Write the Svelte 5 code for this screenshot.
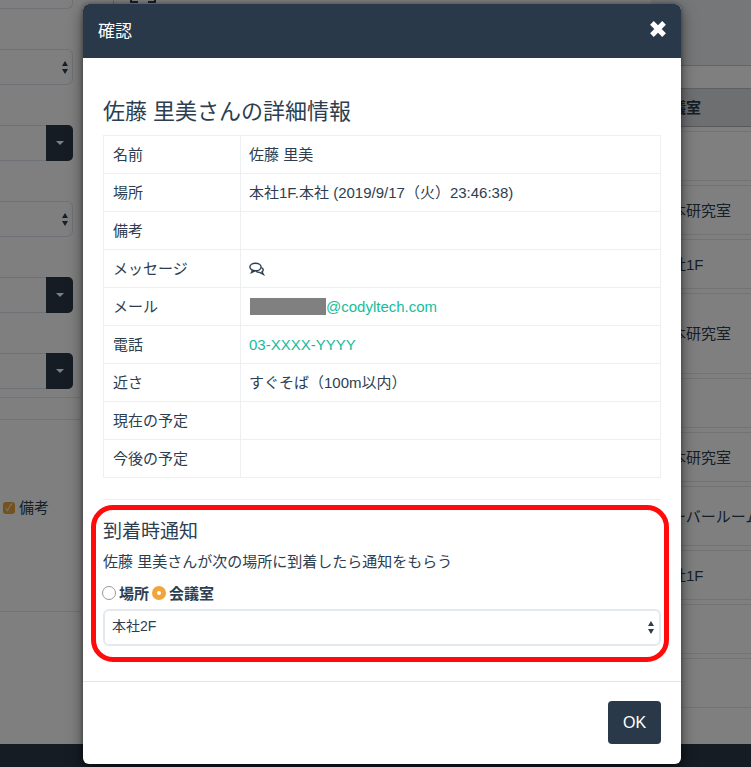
<script>
  const leftControls = [
    { kind: 'select' },
    { kind: 'group' },
    { kind: 'select' },
    { kind: 'group' },
    { kind: 'group' }
  ];
  const rows = [
    { cls: 'short', text: '' },
    { cls: 'short', text: '本研究室' },
    { cls: 'short near', text: '本社1F' },
    { cls: 'tall', text: '本研究室' },
    { cls: 'short', text: '' },
    { cls: 'short', text: '本研究室' },
    { cls: 'mid-h near', text: 'サーバールーム' },
    { cls: 'short near', text: '本社1F' },
    { cls: 'short', text: '' },
    { cls: 'short', text: '' }
  ];
  const info = [
    ['名前', '佐藤 里美'],
    ['場所', '本社1F.本社 (2019/9/17（火）23:46:38)'],
    ['備考', ''],
    ['メッセージ', 'icon'],
    ['メール', 'mail'],
    ['電話', 'tel'],
    ['近さ', 'すぐそば（100m以内）'],
    ['現在の予定', ''],
    ['今後の予定', '']
  ];
</script>

<div class="page">
  <div class="left">
    <div class="stub"></div>
    {#each leftControls as c}
      <div class="ctl">
        {#if c.kind === 'select'}
          <span class="updown"><i class="up"></i><i class="down"></i></span>
        {:else}
          <span class="addon"><i class="caret"></i></span>
        {/if}
      </div>
    {/each}
    <div class="rule r-a"></div>
    <div class="rule r-b"></div>
    <label class="check"><span class="box">✓</span>備考</label>
    <div class="rule r-c"></div>
  </div>
  <div class="mid">
    <div class="brackets"><i></i><i></i></div>
  </div>
  <div class="right">
    <div class="band"></div>
    <div class="head">会議室</div>
    {#each rows as r}
      <div class="row {r.cls}">{r.text}</div>
    {/each}
  </div>
  <div class="footer"></div>

  <div class="overlay">
    <div class="modal">
      <header class="m-head">
        <span class="m-title">確認</span>
        <svg class="close" viewBox="0 0 16 16" aria-label="閉じる">
          <path d="M2.6 2.6 L13.4 13.4 M13.4 2.6 L2.6 13.4" />
        </svg>
      </header>
      <div class="m-body">
        <h3>佐藤 里美さんの詳細情報</h3>
        <table>
          <tbody>
            {#each info as [k, v]}
              <tr>
                <th>{k}</th>
                <td>
                  {#if v === 'icon'}
                    <svg class="chat" viewBox="0 0 16 14">
                      <ellipse cx="6.5" cy="5" rx="5.6" ry="3.8" />
                      <path d="M3.5 8.2 L2.5 10.5 L6 8.8" />
                      <path d="M12.4 5.6 C14.6 6.4 14.8 8.6 13 9.8 L14.4 12.4 L10.6 10.4 C9 10.4 7.8 10 7 9.2" />
                    </svg>
                  {:else if v === 'mail'}
                    <span class="redact"></span><a href="#m">@codyltech.com</a>
                  {:else if v === 'tel'}
                    <a href="#t">03-XXXX-YYYY</a>
                  {:else}
                    {v}
                  {/if}
                </td>
              </tr>
            {/each}
          </tbody>
        </table>
        <hr />
        <h4>到着時通知</h4>
        <p>佐藤 里美さんが次の場所に到着したら通知をもらう</p>
        <div class="radios">
          <span class="radio"></span><b>場所</b>
          <span class="radio on"></span><b>会議室</b>
        </div>
        <div class="select">
          <span class="sel-text">本社2F</span>
          <span class="updown dark"><i class="up"></i><i class="down"></i></span>
        </div>
        <div class="redbox"></div>
      </div>
      <footer class="m-foot">
        <button type="button">OK</button>
      </footer>
    </div>
  </div>
</div>

<style>
  :global(body) {
    margin: 0;
    background: #fff;
  }
  .page {
    position: relative;
    width: 751px;
    height: 767px;
    overflow: hidden;
    display: flex;
    background: #fff;
    color: #2c3e50;
    font: 15px/21px "Liberation Sans", "Noto Sans CJK JP", sans-serif;
  }

  /* page behind the dialog */
  .left {
    width: 73px;
    flex: none;
    display: flex;
    flex-direction: column;
  }
  .stub {
    height: 8px;
    border: 1px solid #dce4ec;
    border-top: 0;
    border-left: 0;
    border-radius: 0 0 6px 0;
  }
  .ctl {
    height: 36px;
    margin-top: 40px;
    box-sizing: border-box;
    border: 1px solid #dce4ec;
    border-left: 0;
    border-radius: 0 6px 6px 0;
    display: flex;
    justify-content: flex-end;
    align-items: center;
  }
  .addon {
    width: 27px;
    height: 36px;
    margin: 0 -1px 0 0;
    background: #2a3949;
    border-radius: 0 5px 5px 0;
    display: flex;
    align-items: center;
    justify-content: center;
  }
  .caret {
    width: 0;
    height: 0;
    border-left: 4px solid transparent;
    border-right: 4px solid transparent;
    border-top: 4px solid #fff;
  }
  .updown {
    display: flex;
    flex-direction: column;
    gap: 3px;
    margin-right: 4px;
  }
  .updown i {
    width: 0;
    height: 0;
    border-left: 3.5px solid transparent;
    border-right: 3.5px solid transparent;
  }
  .updown .up { border-bottom: 5px solid #2c3e50; }
  .updown .down { border-top: 5px solid #2c3e50; }
  .rule {
    height: 1px;
    background: #e7e7e7;
    width: 81px;
  }
  .r-a { margin-top: 8px; }
  .r-b { margin-top: 21px; }
  .check {
    margin-top: 77px;
    padding-left: 3px;
    display: flex;
    align-items: center;
    gap: 4px;
    height: 21px;
  }
  .box {
    width: 12px;
    height: 12px;
    background: #e9a43a;
    border-radius: 3px;
    color: #fff;
    font-size: 10px;
    line-height: 12px;
    text-align: center;
  }
  .r-c { margin-top: 93px; }
  .mid {
    flex: 1;
    border-left: 1px solid #cfcfcf;
    margin-left: 40px;
  }
  .brackets {
    width: 26px;
    margin-left: 16px;
    display: flex;
    justify-content: space-between;
  }
  .brackets i {
    width: 8px;
    height: 3px;
    border-bottom: 2px solid #2c3e50;
    border-left: 2px solid #2c3e50;
    box-sizing: border-box;
  }
  .brackets i + i {
    border-left: 0;
    border-right: 2px solid #2c3e50;
  }
  .right {
    width: 100px;
    flex: none;
    display: flex;
    flex-direction: column;
  }
  .band {
    height: 65px;
    background: #eceef0;
    border-bottom: 1px solid #c6c9cc;
  }
  .head {
    margin-top: 22px;
    height: 39px;
    box-sizing: border-box;
    border-top: 1px solid #bcc0c4;
    border-bottom: 1px solid #aeb2b6;
    background: #dcdfe2;
    font-weight: 700;
    line-height: 37px;
    padding-left: 5px;
  }
  .row {
    margin-top: 4px;
    border-top: 1px solid #e6e6e6;
    border-bottom: 1px solid #e6e6e6;
    white-space: nowrap;
    overflow: hidden;
    padding-left: 20px;
    display: flex;
    align-items: center;
  }
  .short { height: 48px; }
  .tall { height: 79px; }
  .mid-h { height: 58px; }
  .near { padding-left: 5px; }

  .footer {
    position: absolute;
    left: 0;
    right: 0;
    bottom: 0;
    height: 23px;
    background: #2a3949;
  }

  /* dialog */
  .overlay {
    position: absolute;
    inset: 0;
    background: rgba(0, 0, 0, 0.5);
    padding: 4px 70px 0 83px;
  }
  .modal {
    width: 598px;
    height: 760px;
    background: #fff;
    border-radius: 6px;
    box-shadow: 0 5px 15px rgba(0, 0, 0, 0.5), 0 0 4px rgba(0, 0, 0, 0.35);
    display: flex;
    flex-direction: column;
  }
  .m-head {
    height: 54px;
    flex: none;
    box-sizing: border-box;
    background: #2a3949;
    color: #fff;
    border-radius: 6px 6px 0 0;
    padding: 0 15px;
    display: flex;
    align-items: center;
    justify-content: space-between;
  }
  .m-title { font-size: 17px; }
  .close {
    width: 18px;
    height: 18px;
    margin-top: -4px;
    margin-right: -1px;
    fill: none;
    stroke: #fff;
    stroke-width: 4.6;
  }
  .m-body {
    flex: 1;
    padding: 40px 20px 0;
    position: relative;
  }
  h3 {
    margin: 0 0 9px;
    font-size: 22px;
    line-height: 28px;
    font-weight: 400;
  }
  table {
    width: 100%;
    border-collapse: collapse;
  }
  th, td {
    border: 1px solid #ecf0f1;
    padding: 8px 8px;
    text-align: left;
    font-weight: 400;
    height: 21px;
    line-height: 20px;
  }
  th {
    width: 119px;
    padding-left: 9px;
  }
  a {
    color: #18bc9c;
    text-decoration: none;
  }
  .redact {
    display: inline-block;
    width: 76px;
    height: 17px;
    margin-left: 1px;
    background: #808080;
    vertical-align: -3px;
  }
  .chat {
    width: 16px;
    height: 14px;
    fill: none;
    stroke: #2c3e50;
    stroke-width: 1.4;
    vertical-align: -2px;
  }
  hr {
    border: 0;
    border-top: 1px solid #ecf0f1;
    margin: 21px 0 0;
  }
  h4 {
    margin: 19px 0 0;
    font-size: 19px;
    line-height: 25px;
    font-weight: 400;
  }
  p {
    margin: 7px 0 0;
  }
  .radios {
    margin-top: 10px;
    display: flex;
    align-items: center;
    height: 22px;
    margin-left: -1px;
  }
  .radio {
    width: 14px;
    height: 14px;
    box-sizing: border-box;
    border-radius: 50%;
    border: 1px solid #999;
    background: #fff;
    margin-right: 3px;
  }
  .radio.on {
    margin-left: 3px;
    border: 5px solid #f0a43a;
    background: #fff;
  }
  .select {
    margin-top: 5px;
    height: 37px;
    box-sizing: border-box;
    border: 2px solid #e4e9ee;
    border-radius: 6px;
    padding: 0 7px;
    display: flex;
    align-items: center;
    justify-content: space-between;
  }
  .sel-text {
    font-size: 14px;
    margin-top: -2px;
  }
  .dark { margin-right: -2px; }
  .redbox {
    position: absolute;
    left: 8px;
    top: 447px;
    width: 578px;
    height: 157px;
    box-sizing: border-box;
    border: 5px solid #ff0b0b;
    border-radius: 22px;
  }
  .m-foot {
    height: 83px;
    flex: none;
    box-sizing: border-box;
    border-top: 1px solid #e5e5e5;
    padding: 19px 20px;
    display: flex;
    justify-content: flex-end;
  }
  button {
    width: 53px;
    height: 43px;
    border: 0;
    border-radius: 4px;
    background: #2a3949;
    color: #fff;
    font: 16px "Liberation Sans", sans-serif;
  }
</style>
